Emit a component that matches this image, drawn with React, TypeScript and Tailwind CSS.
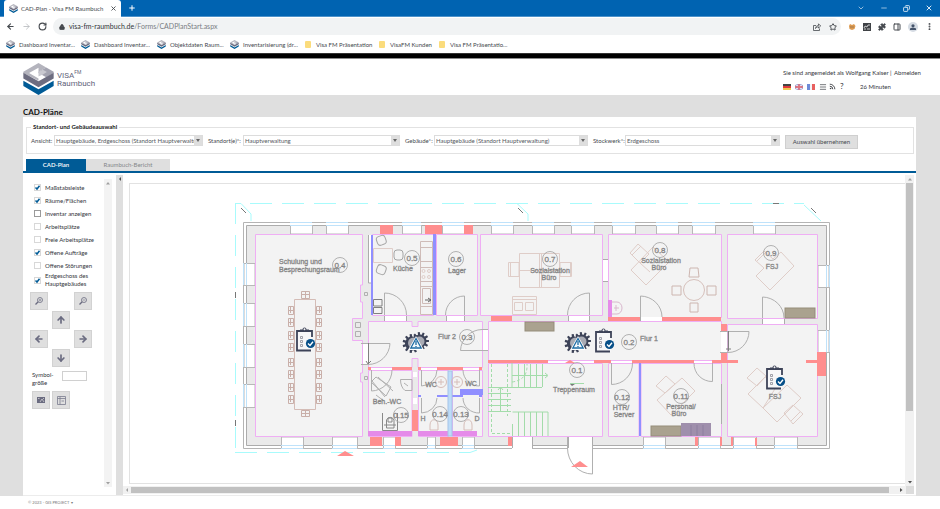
import React from "react";
import {
  ArrowDown,
  ArrowLeft,
  ArrowRight,
  ArrowUp,
  ChevronDown,
  Copy,
  Lock,
  Menu,
  Minus,
  MoreVertical,
  PanelRight,
  Plus,
  Puzzle,
  RotateCw,
  Rss,
  Star,
  X,
} from "lucide-react";

function Logo({ className }: { className: string }) {
  return (
    <svg viewBox="0 0 90 95" className={className} aria-hidden="true">
      <path d="M0 26 45 0 68 13 45 26 45 14 17 30 45 46 45 53 0 30Z" fill="#b4b4bd" />
      <path d="M45 26 68 13 90 26 90 30 68 42 45 30Z" fill="#a3a3b0" />
      <path d="M45 26 58 20 70 27 58 34 45 40Z" fill="#c9c9d0" />
      <path d="M0 29 45 54 90 29 90 46 45 72 0 46Z" fill="#6d6d80" />
      <path d="M0 53 45 78 90 53 90 68 45 95 0 68Z" fill="#005b96" />
    </svg>
  );
}

const bookmarks = [
  { label: "Dashboard Inventar...", folder: false, w: "w-[75px]" },
  { label: "Dashboard Inventar...", folder: false, w: "w-[76px]" },
  { label: "Objektdaten Raum...", folder: false, w: "w-[73px]" },
  { label: "Inventarisierung (dr...", folder: false, w: "w-[75px]" },
  { label: "Visa FM Präsentation", folder: true, w: "w-[74px]" },
  { label: "VisaFM Kunden", folder: true, w: "w-[60px]" },
  { label: "Visa FM Präsentatio...", folder: true, w: "w-[76px]" },
];

function BrowserChrome() {
  return (
    <div className="text-[#45494e]">
      <div className="flex h-[17px] items-center border-b border-[#4d92ca] bg-[#0063b1] text-[#dbe9f5]">
        <div className="ml-1 flex h-[17px] w-[117px] items-center self-start rounded-t-[3px] bg-white pl-[5px] pr-1 text-[6px] text-[#45494e]">
          <Logo className="mr-[3px] h-[9px] w-[9px]" />
          <span className="flex-1 whitespace-nowrap">CAD-Plan - Visa FM Raumbuch</span>
          <button aria-label="Tab schließen">
            <X className="h-[7px] w-[7px]" strokeWidth={3} />
          </button>
        </div>
        <button aria-label="Neuer Tab" className="ml-[7px]">
          <Plus className="h-2 w-2 text-white" strokeWidth={3} />
        </button>
        <div className="ml-auto flex items-center gap-[15px] pr-[7px]">
          <button aria-label="Tabs durchsuchen"><ChevronDown className="h-2 w-2" /></button>
          <button aria-label="Minimieren"><Minus className="h-2 w-2" /></button>
          <button aria-label="Verkleinern"><Copy className="h-[7px] w-[7px] -scale-x-100" strokeWidth={3} /></button>
          <button aria-label="Schließen"><X className="h-2 w-2" strokeWidth={3} /></button>
        </div>
      </div>
      <div className="flex h-[19px] items-center bg-white pl-[6px] pr-[6px]">
        <div className="flex w-[47px] items-center gap-[7px]">
          <button aria-label="Zurück"><ArrowLeft className="h-[9px] w-[9px]" strokeWidth={3} /></button>
          <button aria-label="Vorwärts"><ArrowRight className="h-[9px] w-[9px] text-[#b0b3b7]" /></button>
          <button aria-label="Neu laden"><RotateCw className="h-[9px] w-[9px]" strokeWidth={3} /></button>
        </div>
        <div className="flex h-[17px] flex-1 items-center rounded-full bg-[#f1f3f4] pl-[6px] pr-1">
          <Lock className="mr-1 h-[6px] w-[6px] fill-current" strokeWidth={3} />
          <span className="flex-1 text-[7px] text-[#7a7e83]">
            <span className="text-[#303338]">visa-fm-raumbuch.de</span>/Forms/CADPlanStart.aspx
          </span>
          <button aria-label="Teilen" className="mr-2">
            <svg viewBox="0 0 8 8" className="h-2 w-2" fill="none" stroke="currentColor" strokeWidth=".8" aria-hidden="true">
              <path d="M3 2.500H.500V7.500H6.500V5.500M2.500 5.500C2.500 3.500 4 2.500 5.500 2.500V.800L7.700 3 5.500 5V3.800C4.500 3.800 3.500 4.200 2.500 5.500Z" />
            </svg>
          </button>
          <button aria-label="Lesezeichen"><Star className="h-2 w-2" strokeWidth={3} /></button>
        </div>
        <div className="flex items-center gap-[7px] pl-[7px]">
          <svg viewBox="0 0 8 8" className="h-2 w-2" aria-hidden="true">
            <path d="M1 3 2 1 4 2 6 1 7.500 3 6.500 6 4 7 1.500 6Z" fill="#dd9a50" />
            <path d="M2 4h4" stroke="#a07a52" />
          </svg>
          <svg viewBox="0 0 8 8" className="h-2 w-2" aria-hidden="true">
            <path d="M0 0h8v8H0Z" fill="#3f4246" />
            <path d="M1 5 2 3 4 4 5 2M5 2h2M1 6h2M4 6h3" stroke="#fff" strokeWidth=".7" fill="none" />
          </svg>
          <Puzzle className="h-2 w-2 fill-current" />
          <PanelRight className="h-2 w-2" strokeWidth={3} />
          <svg viewBox="0 0 10 10" className="h-[10px] w-[10px]" aria-hidden="true">
            <circle cx="5" cy="5" r="5" fill="#d5dbe3" />
            <path d="M2 8V6.500C3 5.500 7 5.500 8 6.500V8Z" fill="#45546b" />
            <circle cx="5" cy="3.800" r="1.600" fill="#45546b" />
          </svg>
          <MoreVertical className="h-[9px] w-[9px]" strokeWidth={3} />
        </div>
      </div>
      <nav className="flex h-[17px] items-center bg-white pl-[6px] text-[6px]">
        {bookmarks.map((b, i) => (
          <a key={i} href="#" className={`flex items-center whitespace-nowrap ${b.w}`}>
            {b.folder ? (
              <span className="mr-[5px] h-[7px] w-[6px] rounded-[1px] bg-[#fbdc7c]" />
            ) : (
              <Logo className="mr-1 h-[9px] w-[9px]" />
            )}
            {b.label}
          </a>
        ))}
      </nav>
      <div className="h-[6px] border-y border-t-[#333] border-b-[#8a8a8a] bg-black" />
    </div>
  );
}

function Header() {
  return (
    <header className="flex h-[36px] bg-white pl-[23px] text-[#33363c]">
      <Logo className="mt-1 h-8 w-[31px]" />
      <div className="mt-[13px] pl-[3px] font-['Roboto'] text-[8px] leading-[8px] text-[#62647a]">
        VISA<sup className="align-top text-[5px] leading-[5px]">FM</sup>
        <br />
        Raumbuch
      </div>
      <div className="ml-auto w-[157px] pt-[9px] text-[6px] leading-[9px]">
        <div className="whitespace-nowrap">
          Sie sind angemeldet als Wolfgang Kaiser | <a href="#" className="ml-[1px]">Abmelden</a>
        </div>
        <div className="mt-[5px] flex items-center">
          <svg viewBox="0 0 32 6" className="h-[6px] w-8" role="img" aria-label="Sprachen">
            <path d="M0 0h8v2H0Z" fill="#444" />
            <path d="M0 2h8v2H0Z" fill="#e0393b" />
            <path d="M0 4h8v2H0Z" fill="#efc850" />
            <path d="M12 0h8v6h-8Z" fill="#a6acd9" />
            <path d="M12 0 20 6M20 0 12 6" stroke="#fff" />
            <path d="M12 3h8M16 0v6" stroke="#e3646c" strokeWidth="1.300" />
            <path d="M24 0h3v6h-3Z" fill="#6d8bd8" />
            <path d="M27 0h2v6h-2Z" fill="#f3f3f6" />
            <path d="M29 0h3v6h-3Z" fill="#e8605f" />
          </svg>
          <Menu className="ml-1 h-2 w-2" />
          <Rss className="ml-[2px] h-[7px] w-[7px]" strokeWidth={3} />
          <span className="ml-1 w-[19px] text-[8px]">?</span>
          <span className="ml-[1px]">26 Minuten</span>
        </div>
      </div>
    </header>
  );
}

function Field({ id, label, value }: { id: string; label: string; value: string }) {
  return (
    <>
      <label htmlFor={id} className="whitespace-nowrap pl-[5px] first:pl-0">{label}</label>
      <div className="flex h-[11px] min-w-0 border border-[#dcdcdc] bg-white">
        <select id={id} className="h-full min-w-0 flex-1 appearance-none overflow-hidden pl-[1px] text-[6px] leading-[9px] text-[#55585e]">
          <option>{value}</option>
        </select>
        <span className="flex w-2 items-center justify-center bg-[#dedede]">
          <svg viewBox="0 0 4 3" className="h-[3px] w-1" aria-hidden="true"><path d="M0 0h4L2 3Z" fill="#666" /></svg>
        </span>
      </div>
    </>
  );
}

const layers = [
  { label: "Maßstabsleiste", on: true },
  { label: "Räume/Flächen", on: true },
  { label: "Inventar anzeigen", on: false },
  { label: "Arbeitsplätze", on: false },
  { label: "Freie Arbeitsplätze", on: false },
  { label: "Offene Aufträge", on: true },
  { label: "Offene Störungen", on: false },
  { label: "Erdgeschoss des Hauptgebäudes", on: true },
];

function ToolButton({ label, children, className = "" }: { label: string; children: React.ReactNode; className?: string }) {
  return (
    <button aria-label={label} className={`flex h-[18px] w-[18px] items-center justify-center border border-[#d2d2d2] bg-[#dfdfdf] text-[#6a6b80] ${className}`}>
      {children}
    </button>
  );
}

function Magnifier({ plus }: { plus: boolean }) {
  return (
    <svg viewBox="0 0 8 8" className="h-2 w-2" fill="none" stroke="currentColor" aria-hidden="true">
      <circle cx="5" cy="3" r="2.500" strokeWidth=".8" />
      <path d="M3.200 4.800 .500 7.500" strokeWidth="1.300" />
      <path d={plus ? "M3.800 3h2.400M5 1.800v2.400" : "M3.800 3h2.400"} strokeWidth=".6" />
    </svg>
  );
}

function ScrollArrow({ d, dark }: { d: string; dark?: boolean }) {
  return (
    <svg viewBox="0 0 8 8" className="h-2 w-2 shrink-0" aria-hidden="true">
      <path d={d} fill={dark ? "#505050" : "#a0a0a0"} />
    </svg>
  );
}
const UP = "M4 3 6 5.500H2Z";
const DOWN = "M4 5.500 2 3H6Z";
const LEFT = "M3 4 5 2V6Z";
const RIGHT = "M5.500 4 3 2V6Z";

function Sidebar() {
  return (
    <aside className="flex w-[93px] shrink-0 pt-[6px] pb-2 text-[6px] leading-[8px] text-[#33363c]">
      <div className="w-[81px] pl-[7px] pt-[2px]">
        {layers.map((l, i) => (
          <label key={l.label} className="flex min-h-[13px] items-center pl-[4px]">
            <span className="relative mr-[4px] h-[7px] w-[7px] shrink-0">
              <input type="checkbox" defaultChecked={l.on} className={`peer block h-[7px] w-[7px] appearance-none border bg-white ${i === 2 ? "border-[#9a9a9a]" : "border-[#d8d8d8]"}`} />
              <svg viewBox="0 0 7 7" className="pointer-events-none absolute inset-0 hidden h-[7px] w-[7px] peer-checked:block" aria-hidden="true">
                <path d="M1.500 3.500 3 5 5.500 1.800" fill="none" stroke="#005b96" strokeWidth="1.500" />
              </svg>
            </span>
            <span className={i === 7 ? "w-[50px]" : "whitespace-nowrap"}>{l.label}</span>
          </label>
        ))}
        <div className="mt-1 grid w-[62px] grid-cols-3 gap-x-1 gap-y-[1px]">
          <ToolButton label="Vergrößern"><Magnifier plus /></ToolButton>
          <ToolButton label="Verkleinern" className="col-start-3"><Magnifier plus={false} /></ToolButton>
          <ToolButton label="Nach oben" className="col-start-2"><ArrowUp className="h-[10px] w-[10px]" strokeWidth={4} /></ToolButton>
          <ToolButton label="Nach links" className="col-start-1"><ArrowLeft className="h-[10px] w-[10px]" strokeWidth={4} /></ToolButton>
          <ToolButton label="Nach rechts" className="col-start-3"><ArrowRight className="h-[10px] w-[10px]" strokeWidth={4} /></ToolButton>
          <ToolButton label="Nach unten" className="col-start-2"><ArrowDown className="h-[10px] w-[10px]" strokeWidth={4} /></ToolButton>
        </div>
        <div className="mt-1 flex pl-[2px]">
          <label htmlFor="symbol" className="w-[30px]">Symbol-<br />größe</label>
          <input id="symbol" className="h-[10px] w-[25px] border border-[#d0d0d0] bg-white" />
        </div>
        <div className="mt-1 flex gap-[2px] pl-[2px]">
          <ToolButton label="Bild speichern">
            <svg viewBox="0 0 8 6" className="h-[6px] w-2" aria-hidden="true">
              <path d="M0 0h8v6H0Z" fill="#6a6b80" />
              <path d="M1 1.500h1.500M3 5 5 2 7 5M6 1.500h1" stroke="#dfdfdf" strokeWidth=".7" fill="none" />
            </svg>
          </ToolButton>
          <ToolButton label="Legende">
            <svg viewBox="0 0 9 9" className="h-[9px] w-[9px]" fill="none" stroke="#7a7b8e" strokeWidth=".8" aria-hidden="true">
              <path d="M.5.5h8v8h-8ZM.5 2.500h8M3 .5v8M4.500 5H7" />
            </svg>
          </ToolButton>
        </div>
      </div>
      <div className="flex w-2 flex-col justify-between bg-[#f3f3f3]">
        <ScrollArrow d={UP} />
        <ScrollArrow d={DOWN} />
      </div>
    </aside>
  );
}

type Box = [number, number, number, number];
function Boxes({ items, fill, stroke }: { items: Box[]; fill: string; stroke?: string }) {
  return (
    <g fill={fill} stroke={stroke}>
      {items.map(([x, y, x2, y2], i) => (
        <rect key={i} x={x} y={y} width={x2 - x} height={y2 - y} />
      ))}
    </g>
  );
}

const topWindows: [number, number][] = [[290, 312], [326, 348], [402, 421], [442, 464], [491, 513], [532, 554], [571, 594], [612, 635], [656, 678], [692, 715], [753, 775]];
const bottomWindows: [number, number][] = [[281, 303], [332, 357], [383, 395], [427, 435], [462, 474], [643, 665], [698, 720], [733, 756], [774, 797]];
const leftWindows: [number, number][] = [[263, 285], [303, 326], [344, 367], [384, 407]];
const rightWindows: [number, number][] = [[265, 287], [330, 352]];

const rooms = [
  "M255.500 234.500H362.500V285H360.500V302H362.500V318.500H352.500V340.500H362.500V373H360.500V382H362.500V436.500H255.500Z",
  "M372.500 234.500H433.500V315.500H372.500Z",
  "M436.500 234.500H477.500V315.500H436.500Z",
  "M480.500 234.500H602.500V315.500H480.500Z",
  "M608.500 234.500H721.500V317.500H608.500Z",
  "M727.500 234.500H817.500V318.500H727.500Z",
  "M368.500 321.500H412V326.500H418V321.500H482.500V367.500H418V358.500H412V367.500H368.500Z",
  "M488.500 321.500H721.500V360.500H488.500Z",
  "M727.500 324.500H817.500V436.500H727.500Z",
  "M368.500 370.500H412V436.500H368.500Z",
  "M418.500 370.500H448.500V436.500H418.500Z",
  "M452.500 370.500H482.500V436.500H452.500Z",
  "M488.500 363.500H602.500V436.500H488.500Z",
  "M608.500 363.500H639V436.500H608.500Z",
  "M641 363.500H721.500V436.500H641Z",
];

const openings: Box[] = [
  [384, 316, 406, 321], [446, 316, 464, 321], [568, 316, 589, 321], [640, 317, 662, 321], [762, 319, 784, 324],
  [721, 331, 727, 352], [363, 343, 368, 364], [483, 330, 488, 351], [371, 368, 392, 370], [421, 368, 437, 370],
  [463, 368, 479, 370], [548, 361, 594, 363], [611, 361, 632, 363], [694, 361, 712, 363], [603, 259, 608, 281],
  [368, 235, 371, 283], [413, 372, 417, 377], [413, 398, 417, 404],
];

const reds: Box[] = [
  [380, 225, 393, 234], [425, 225, 442, 234], [464, 225, 473, 234], [370, 437, 382, 446], [395, 437, 401, 446],
  [440, 437, 458, 446], [508, 437, 512, 446], [695, 437, 698, 446], [720, 437, 722, 446], [731, 437, 733, 446],
  [755, 438, 757, 446], [491, 316, 512, 321], [608, 317, 640, 321], [662, 317, 721, 321], [488, 360, 548, 363],
  [594, 360, 611, 363], [632, 360, 694, 363], [712, 360, 738, 363], [806, 360, 817, 363], [721, 324, 727, 331],
  [721, 353, 727, 360], [368, 367, 371, 370], [392, 367, 412, 370], [418, 367, 421, 370], [437, 367, 463, 370],
  [479, 367, 482, 370], [412, 410, 418, 431], [817, 352, 826, 376],
];

const doors = [
  "M384.500 315V293A22 22 0 0 1 406.500 315",
  "M464.500 315V296A19 19 0 0 0 445.500 315",
  "M589.500 315V293A22 22 0 0 0 567.500 315",
  "M640.500 317V296A22 21 0 0 1 662 317",
  "M762.500 318V297A22 21 0 0 1 784 318",
  "M728 331.500H749A21 21 0 0 1 728 352.500",
  "M720 331.500H728V352.500H720",
  "M368 343.500H390A22 22 0 0 1 368 364.500",
  "M361 343.500H368.500V364.500H361",
  "M488 329.500H482A22 22 0 0 0 460.500 350.500H488",
  "M371.500 370V391A21 21 0 0 0 392 370",
  "M421.500 370V386A16 16 0 0 0 437 370",
  "M421.500 398V413A16 15 0 0 0 437 398",
  "M479.500 370V386A16 16 0 0 1 463 370",
  "M479.500 398V413A16 15 0 0 1 463 398",
  "M611.500 363V384.500A21 21 0 0 0 632.500 363",
  "M712.500 363V381.500A18 18 0 0 1 694 363",
  "M592.500 445V474A25 26 0 0 1 567.500 448V437",
];

const roomNumbers: [string, number, number][] = [
  ["0.4", 340, 265], ["0.5", 412, 258], ["0.6", 456, 259], ["0.7", 550, 259], ["0.8", 660, 250], ["0.9", 771, 253],
  ["0.3", 467, 337], ["0.2", 629, 342], ["0.1", 577, 370], ["0.12", 622, 397], ["0.11", 681, 396], ["0.15", 401, 415],
  ["0.14", 440, 414], ["0.13", 461, 414],
];

const roomNames: [string, number, number][] = [
  ["Küche", 403, 271], ["Lager", 457, 273], ["Sozialstation", 550, 273], ["Büro", 549, 280], ["Sozialstation", 661, 263],
  ["Büro", 659, 270], ["FSJ", 772, 269], ["Flur 2", 447, 339], ["Flur 1", 649, 341], ["Treppenraum", 574, 392],
  ["Personal/", 681, 409], ["Büro", 679, 416], ["Beh.-WC", 387, 404], ["WC", 431, 387], ["WC", 471, 386],
  ["H", 423, 421], ["D", 477, 421], ["FSJ", 775, 399], ["HTR/", 621, 410], ["Server", 624, 417],
];

function gearPath(cx: number, cy: number, inner: number, outer: number, teeth: number) {
  const points: string[] = [];
  const step = (Math.PI * 2) / teeth;
  for (let i = 0; i < teeth; i++) {
    [[-0.3, inner], [-0.2, outer], [0.2, outer], [0.3, inner]].forEach(([f, r]) => {
      const a = (i + f) * step;
      points.push(`${cx + Math.cos(a) * r} ${cy + Math.sin(a) * r}`);
    });
  }
  return `M${points.join("L")}Z`;
}

function Fault({ x, y }: { x: number; y: number }) {
  return (
    <g transform={`translate(${x} ${y})`}>
      <path d={gearPath(4, -2, 6.5, 9, 11)} fill="#3d4358" />
      <path d={gearPath(-4, 0.5, 7, 9.5, 11)} fill="#3d4358" />
      <circle cx="3.500" cy="-1.500" r="5" fill="#a9abb4" />
      <circle cx="-2.500" cy="0" r="5.500" fill="#a9abb4" />
      <path d="M0-7 8 7H-8Z" fill="#fff" />
      <path d="M0-4.500 5.200 5H-5.200Z" fill="#f2f8fc" stroke="#1d6ba3" strokeWidth="1.300" />
      <path d="M0-2V2M0 3v1" stroke="#1d6ba3" strokeWidth="1.300" />
    </g>
  );
}

function Order({ x, y }: { x: number; y: number }) {
  return (
    <g transform={`translate(${x} ${y})`}>
      <path d="M1 4H16V24H1Z" fill="#f7f7f8" />
      <path d="M16 10V4H1V23.500H15" fill="none" stroke="#3d4358" strokeWidth="1.800" />
      <path d="M4 5V2.500H6.500A2 2 0 0 1 10.500 2.500H13V5Z" fill="#3d4358" />
      <circle cx="8.500" cy="2.300" r="1" fill="#f3f3f3" />
      <path d="M4.500 9.500h2v2h-2ZM4.500 13.500h2v2h-2ZM4.500 17.500h2v2h-2Z" fill="none" stroke="#8a8c96" strokeWidth=".8" />
      <circle cx="14.500" cy="16.500" r="4.600" fill="#064f88" />
      <path d="M12 16.500 14 18.500 17 14.800" fill="none" stroke="#fff" strokeWidth="1.400" />
    </g>
  );
}

function FloorPlan() {
  return (
    <svg viewBox="130 184 775 300" className="block h-[300px] w-[775px] max-w-none" role="img" aria-label="Grundriss Erdgeschoss">
      <g fill="none" stroke="#a8fbfc">
        <path d="M250 203.500H804" strokeDasharray="22 10" />
        <path d="M235.500 203V452" strokeDasharray="21 11" />
        <path d="M235 452.500H470L477 450" strokeDasharray="22 10" />
        <path d="M235 203.500H241L251 214V221M517 203.500 528 214V221M804 205 821 221" />
      </g>
      <path d="M241 208 246 213M518 208 523 213M811 208 816 213M773 203.500H779M235.500 292V298M235.500 420V426" stroke="#777" />
      <path d="M243.500 222.500H829.500V448.500H243.500Z" fill="#fff" stroke="#b4b4b4" />
      <path d="M246.500 225.500H826.500V445.500H246.500Z" fill="#eaeaea" stroke="#acacac" />
      <g fill="#fff" stroke="#b8b8b8">
        {topWindows.map(([a, b]) => <path key={a} d={`M${a}.5 225.500H${b}.5V234H${a}.5Z`} />)}
        {bottomWindows.map(([a, b]) => <path key={a} d={`M${a}.5 437H${b}.5V448.500H${a}.5Z`} />)}
        {leftWindows.map(([a, b]) => <path key={a} d={`M244 ${a}.5H255V${b}.5H244Z`} />)}
        {rightWindows.map(([a, b]) => <path key={a} d={`M818 ${a}.5H829V${b}.5H818Z`} />)}
      </g>
      <g stroke="#bfe2fa" fill="none">
        {topWindows.map(([a, b]) => <path key={a} d={`M${a} 222.500H${b}M${a} 225.500H${b}`} />)}
        {bottomWindows.map(([a, b]) => <path key={a} d={`M${a} 445.500H${b}M${a} 448.500H${b}`} />)}
        {leftWindows.map(([a, b]) => <path key={a} d={`M243.500 ${a}V${b}M246.500 ${a}V${b}`} />)}
        {rightWindows.map(([a, b]) => <path key={a} d={`M826.500 ${a}V${b}M829.500 ${a}V${b}`} />)}
      </g>
      <path d="M512 437H532V450H512ZM568 437H592V450H568Z" fill="#fff" />
      <path d="M512.500 437V448M532.500 437V448M568.500 437V448M592.500 437V448" stroke="#acacac" />
      <g fill="#f3f3f3" stroke="#efaef4">
        {rooms.map((d) => <path key={d} d={d} />)}
      </g>
      <Boxes items={openings} fill="#fff" />
      <path d="M384.500 316V321M406.500 316V321M446.500 316V321M464.500 316V321M568.500 316V321M589.500 316V321M640.500 317V321M662.500 317V321M762.500 319V324M784.500 319V324M603 259.500H608M603 281.500H608M368.500 235V283H371M721.500 384V424" stroke="#acacac" fill="none" />
      <Boxes items={reds} fill="#ff8e8e" />
      <Boxes items={[[433, 234, 436, 315], [371, 235, 373, 315], [639, 363, 641, 436], [460, 389, 483, 395], [437, 395, 463, 397], [418, 395, 421, 397], [479, 395, 482, 397]]} fill="#908fff" />
      <Boxes items={[[368, 431, 412, 436], [418, 431, 477, 436], [608, 300, 612, 317]]} fill="#e58be9" />
      <Boxes items={[[448, 371, 452, 436]]} fill="#bddcf8" stroke="#a5c4e8" />
      <Boxes items={[[525, 322, 554, 331], [785, 308, 815, 318], [651, 426, 681, 436]]} fill="#aaa28f" stroke="#958d7b" />
      <Boxes items={[[681, 423, 711, 436]]} fill="#9f8fac" />
      <path d="M691 425V436M697 425V436M703 425V436" stroke="#8d7e9f" />

      <g fill="none" stroke="#b0b0b0">
        {doors.map((d) => <path key={d} d={d} />)}
        <path d="M368.500 343V363M366 361 368 364 371 361M728.500 331V351M726 349H731" stroke="#808080" />
        <path d="M355.500 322.500h5v5h-5ZM355.500 331.500h5v5h-5ZM364.500 292.500h3v3h-3ZM364.500 376.500h3v3h-3Z" />
        <path d="M373.500 299.500H382V306H373.500ZM373.500 307.500H382V313.500H373.500Z" stroke="#808080" />
        <path d="M400.500 379.500H412V390.500H405Q400.500 387 400.500 379.500ZM404 383 408 386" />
        <path d="M371 382 376 377 391 387 386 396ZM372 381 385 397M378 377 393 391M376 395 384 401" />
        <path d="M382.500 413V430.500H397.500V413M386.500 428V420A4 4 0 0 1 394 420V428ZM384 425H396M388 418h4v4h-4Z" stroke="#888" />
      </g>

      <g fill="none" stroke="#dfcdc8">
        <path d="M294.500 299.500H315.500V409.500H294.500Z" stroke="#d4bcb6" />
        {[310, 322, 335, 347, 362, 374, 387, 399].map((y) => (
          <path key={y} d={`M288.500 ${y - 4}.5h5v8h-5ZM290.500 ${y - 3}v6M288 ${y}.500h6M316.500 ${y - 4}.5h5v8h-5ZM319.500 ${y - 3}v6M316 ${y}.500h6`} stroke="#c9afa9" />
        ))}
        <path d="M301.500 291.500h8v7h-8ZM301 294.500h8M305.500 291v7M301.500 410.500h8v6h-8ZM301 413.500h8M305.500 410v7" stroke="#c9afa9" />
        <path d="M373.500 248.500H392.500V262.500H373.500Z" />
        <path d="M420.500 241.500H432.500V314.500H420.500ZM420.500 247.500H432M420.500 261.500H432M420.500 267.500H432M420.500 281.500H432M420.500 286.500H432M420.500 306.500H432M422.500 288.500H430.500V303.500H422.500Z" stroke="#cfbcb8" />
        <circle cx="423.500" cy="271" r="1.500" /><circle cx="429" cy="271" r="1.500" /><circle cx="423.500" cy="277" r="1.500" /><circle cx="429" cy="277" r="1.500" />
        <path d="M519.500 253.500H559.500V287.500H519.500ZM539.500 253V287M541.500 253V287M519 270.500H559M508.500 262.500H519V276.500H508.500ZM510.500 262V276M560 262.500H571.500V276.500H560ZM570.500 262V276" />
        <path d="M512.500 296.500H536.500V314.500H512.500ZM512 299.500H536M514.500 302.500H522.500V310.500H514.500ZM525.500 302.500H533.500V310.500H525.500Z" />
        <path d="M630 253 638 244 649 254 640 263ZM632 255 641 246M631 270 653 247 669 262 646 285ZM640 263 650 272" />
        <circle cx="694" cy="290" r="10.500" stroke="#d6c0bb" />
        <path d="M690 268H698L699 277H689ZM690 303H698V312H690ZM672 286H681V295H672ZM707 286H716V295H707Z" stroke="#cdb6b0" strokeLinejoin="round" />
        <path d="M612 302H617A5 6 0 0 1 617 314H612M614 308H619M616 305V311" stroke="#d9b7cd" />
        <path d="M755 260 764 251 773 259 781 252 794 266 770 290 756 276 764 268ZM757 261 766 252" />
        <path d="M747 378 757 368 766 376 757 386ZM748 394 765 377 778 384 763 408ZM763 408 787 385 801 398 777 422ZM784 413 793 405 803 414 793 424ZM791 421 800 412" />
        <path d="M656 386 666 376 675 384 665 393ZM657 400 682 378 695 391 671 415Z" />
        <circle cx="441" cy="382" r="5.500" stroke="#d6bdb8" /><circle cx="457" cy="382" r="5.500" stroke="#d6bdb8" />
        <path d="M438 382H444M441 379V385M454 382H460M457 379V385" stroke="#d6bdb8" />
        <path d="M430 430V425C430 418 438 418 438 425V430ZM464 430V425C464 418 472 418 472 425V430Z" stroke="#d6bdb8" />
      </g>

      <g fill="none" stroke="#a5a5a5">
        <rect x="394" y="250" width="9" height="10" rx="3" />
        <rect x="377" y="236" width="9" height="9" rx="3" transform="rotate(-20 381 241)" />
        <rect x="377" y="265" width="9" height="9" rx="3" transform="rotate(20 381 269)" />
        <path d="M425 300H431M428 298 431 300 428 302" stroke="#666" />
      </g>

      <g fill="none" stroke="#a3dcaa">
        <path d="M512 375.500H547M512 363V387M518.500 364V387M524.500 364V387M530.500 364V387M536.500 364V387M542.500 364V387M488 387.500H542M488 393.500H511M488 399.500H511M488 405.500H511M488 411.500H511M500.500 388V411M512.500 412H548V436M518.500 412V436M524.500 412V436M530.500 412V436M536.500 412V436M542.500 412V436M512.500 436V424M545 373 548 375.500 545 378M498 390 500.500 387 503 390" />
        <path d="M491.500 364V433.500H512M507.500 364V416M512 382Q528 380 527 364" strokeDasharray="3 2" />
        <path d="M570 383.500H584" />
      </g>

      <path d="M337 456 345 451 354 456ZM571 467 580 461 588 467ZM565 363 570 360 575 363Z" fill="#ff8e8e" />
      <path d="M570 384H575L572 386Z" fill="#777" />

      <g fontFamily="'Liberation Sans', Arial, sans-serif" fontSize="7" fill="#858585" stroke="#858585" strokeWidth=".3">
        <text x="279" y="264">Schulung und</text>
        <text x="279" y="272">Besprechungsraum</text>
        <g textAnchor="middle">
          {roomNames.map(([t, x, y]) => <text key={`${t}${x}${y}`} x={x} y={y}>{t}</text>)}
        </g>
        <g textAnchor="middle" fontSize="8">
          {roomNumbers.map(([t, x, y]) => (
            <g key={t}>
              <circle cx={x} cy={y} r="7.500" fill="none" stroke="#a0a0a0" strokeWidth=".8" />
              <text x={x} y={y + 3}>{t}</text>
            </g>
          ))}
        </g>
      </g>

      <Order x={296} y={327} />
      <Order x={595} y={328} />
      <Order x={766} y={365} />
      <Fault x={416} y={343} />
      <Fault x={578} y={343} />
    </svg>
  );
}

export default function App() {
  return (
    <div className="flex h-screen flex-col overflow-hidden bg-white font-['Lato','Noto_Sans',sans-serif]">
      <BrowserChrome />
      <Header />
      <main className="flex min-h-0 flex-1 flex-col bg-[#dfdfdf] pl-[23px] pr-6 pt-[13px]">
        <h1 className="h-[9px] text-[8px] leading-[9px] font-bold text-[#111]">CAD-Pläne</h1>
        <section className="flex min-h-0 flex-1 flex-col border-b border-[#ececec] bg-white">
          <fieldset className="ml-[3px] mr-[2px] mt-[7px] h-[30px] border border-[#e2e2e2] pl-[4px] pr-[55px]">
            <legend className="px-[2px] text-[6px] leading-[6px] font-bold text-[#222]">Standort- und Gebäudeauswahl</legend>
            <div className="mt-[5px] grid grid-cols-[23px_149fr_40px_157fr_34px_154fr_37px_155fr_78px] items-start text-[6px] leading-[11px] text-[#45484e]">
              <Field id="ansicht" label="Ansicht:" value="Hauptgebäude, Erdgeschoss (Standort Hauptverwaltung)" />
              <Field id="standort" label="Standort(e)*:" value="Hauptverwaltung" />
              <Field id="gebaeude" label="Gebäude*:" value="Hauptgebäude (Standort Hauptverwaltung)" />
              <Field id="stockwerk" label="Stockwerk*:" value="Erdgeschoss" />
              <button className="ml-[5px] h-[14px] border border-[#cfcfcf] bg-[#dfdfdf] leading-[12px]">Auswahl übernehmen</button>
            </div>
          </fieldset>
          <div className="mt-[5px] flex h-[14px] border-b-2 border-[#005b96] pl-[3px] text-[6px] leading-[12px]">
            <button className="w-[60px] bg-[#005b96] font-semibold text-white">CAD-Plan</button>
            <button className="w-[84px] bg-[#dfdfdf] text-[#85878b]">Raumbuch-Bericht</button>
          </div>
          <div className="flex min-h-0 flex-1">
            <Sidebar />
            <button aria-label="Leiste einklappen" className="mt-[2px] flex w-[7px] shrink-0 items-start bg-[#dfdfdf]">
              <ScrollArrow d={LEFT} dark />
            </button>
            <div className="flex min-w-0 flex-1 flex-col pt-[2px]">
              <div className="flex min-h-0 flex-1">
                <div className="mb-[2px] ml-[6px] mt-2 min-w-0 flex-1 overflow-hidden border border-r-0 border-[#e2e2e2]">
                  <FloorPlan />
                </div>
                <div className="mr-[2px] flex w-[9px] flex-col items-center bg-[#f1f1f1]">
                  <ScrollArrow d={UP} />
                  <div className="w-[7px] flex-[228] bg-[#c1c1c1]" />
                  <div className="flex-[67]" />
                  <ScrollArrow d={DOWN} dark />
                </div>
              </div>
              <div className="mb-[1px] mr-[2px] flex h-2 items-center bg-[#f1f1f1]">
                <ScrollArrow d={LEFT} />
                <div className="h-[6px] flex-[758] bg-[#c1c1c1]" />
                <div className="flex-[8]" />
                <ScrollArrow d={RIGHT} dark />
                <span className="ml-[1px] h-2 w-2 bg-[#dcdcdc]" />
              </div>
            </div>
          </div>
        </section>
      </main>
      <footer className="flex h-[13px] items-center bg-white pl-7 text-[4px] text-[#777]">
        © 2023 - GIS PROJECT <span className="ml-[2px]">▾</span>
      </footer>
    </div>
  );
}
